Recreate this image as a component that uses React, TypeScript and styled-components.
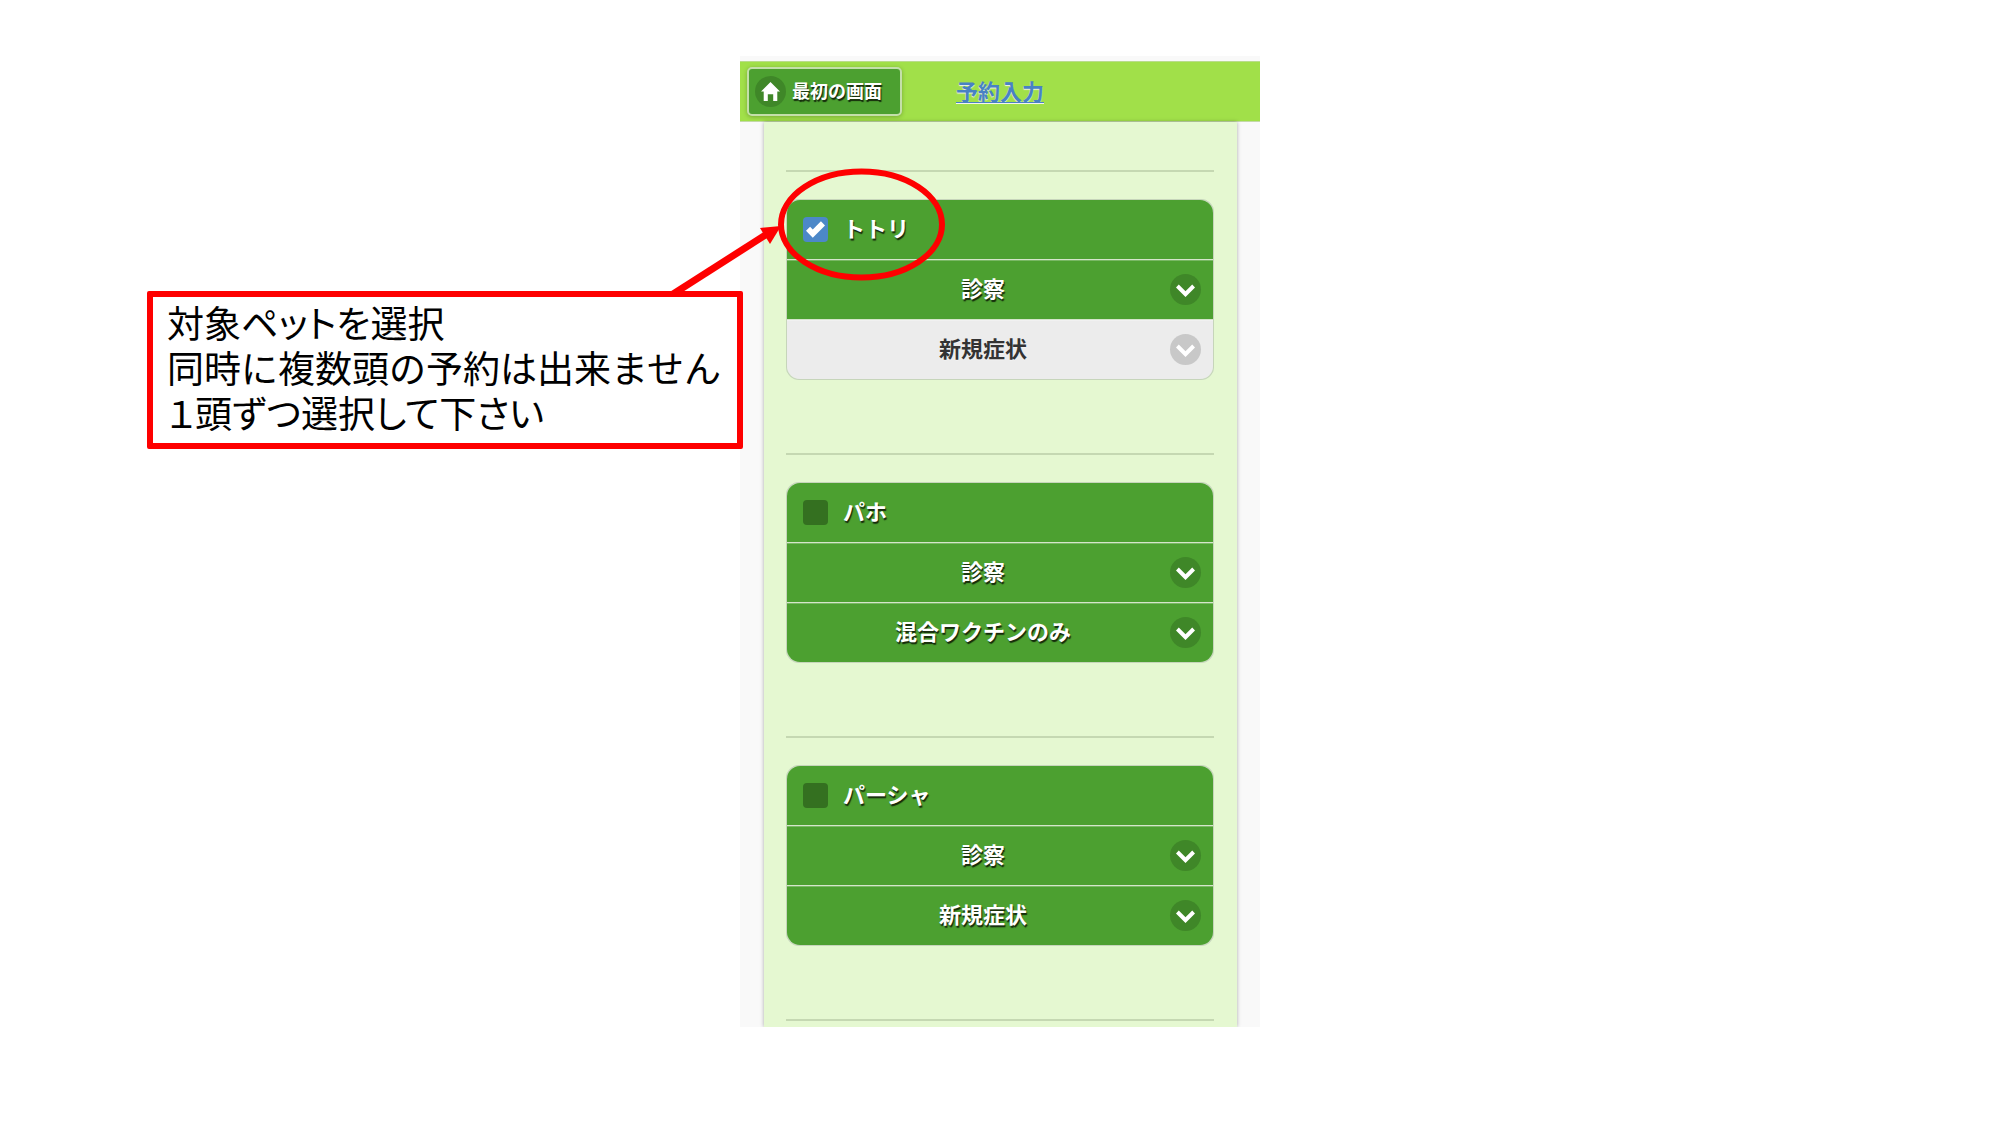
import React, { useState } from "react";
import styled, { createGlobalStyle, css } from "styled-components";

const fontStack = `"Liberation Sans", "Noto Sans CJK JP", sans-serif`;

const GlobalStyle = createGlobalStyle`
  *, *::before, *::after { box-sizing: border-box; }
  body {
    margin: 0;
    background: #fff;
    font-family: ${fontStack};
  }
`;

const Page = styled.main`
  padding: 56px 24px;
`;

const Stage = styled.div`
  position: relative;
  width: 100%;
  max-width: 520px;
  margin: 0 auto;
`;

const Screen = styled.section`
  padding-top: 5px;
  background: #f9f9f9;
  overflow: hidden;
`;

const Header = styled.header`
  display: grid;
  grid-template-columns: 1fr auto 1fr;
  align-items: center;
  padding: 5px 7px;
  background: #a1e049;
  border-top: 1px solid #b9dc8c;
  border-bottom: 1px solid #c3d9a8;
`;

const glyphShadow = css`
  text-shadow: 1px 2px 1px rgba(10, 20, 5, 0.85);
`;

const HomeButton = styled.button`
  justify-self: start;
  display: flex;
  align-items: center;
  gap: 6px;
  height: 49px;
  padding: 0 18px 0 6px;
  border: 2px solid #c4dfaa;
  border-radius: 5px;
  background: #4ca030;
  box-shadow: 0 1px 4px rgba(0, 0, 0, 0.25);
  color: #fff;
  font: 700 18px/26px ${fontStack};
  white-space: nowrap;
  ${glyphShadow}
`;

const Disc = styled.span<{ $muted?: boolean }>`
  display: grid;
  place-items: center;
  width: 31px;
  height: 31px;
  border-radius: 50%;
  background: ${(p) => (p.$muted ? "#c8c8c8" : "#3f8728")};
  pointer-events: none;
`;

const Title = styled.h1`
  margin: 0;
  padding-top: 2px;
  font: 700 22px/32px ${fontStack};
`;

const TitleLink = styled.a`
  color: #4882c4;
  text-decoration: underline;
  text-decoration-thickness: 1px;
  text-underline-offset: 2px;
  text-shadow: 0 1px 1px #f3f3f3;
`;

const Panel = styled.form`
  margin: 0 23px 0 24px;
  padding: 48px 23px 6px 22px;
  background: #e5f8d1;
  box-shadow: 0 0 4px rgba(0, 0, 0, 0.32);
`;

const Rule = styled.hr`
  height: 2px;
  margin: 0;
  border: 0;
  background: #c5d8b2;
`;

const Card = styled.fieldset`
  display: grid;
  gap: 1px;
  min-width: 0;
  margin: 27px 0 73px;
  padding: 0;
  border: 1px solid #c6d5ba;
  border-radius: 13px;
  background: #d5e5ca;
  overflow: hidden;
`;

const CheckRow = styled.label`
  display: flex;
  align-items: center;
  gap: 15px;
  height: 59px;
  padding: 0 16px;
  background: #4ca030;
  color: #fff;
  font-size: 22px;
  font-weight: 700;
  line-height: 32px;
  ${glyphShadow}
`;

const CheckBox = styled.span`
  display: grid;
  place-items: center;
  & > * {
    grid-area: 1 / 1;
  }
  svg {
    pointer-events: none;
  }
`;

const CheckInput = styled.input`
  appearance: none;
  width: 25px;
  height: 25px;
  margin: 0;
  border-radius: 4px;
  background: #347020;
  &:checked {
    background: #4c88c8;
  }
`;

const SelectRow = styled.div`
  display: grid;
  grid-template-columns: minmax(0, 1fr);
  align-items: center;
  & > * {
    grid-area: 1 / 1;
  }
  & > span {
    justify-self: end;
    margin-right: 12px;
  }
`;

const Select = styled.select<{ $muted: boolean }>`
  appearance: none;
  width: 100%;
  height: 59px;
  padding: 0 50px 0 16px;
  border: 0;
  border-radius: 0;
  background: ${(p) => (p.$muted ? "#ececec" : "#4ca030")};
  box-shadow: inset 0 1px 0 rgba(255, 255, 255, 0.25);
  color: ${(p) => (p.$muted ? "#333" : "#fff")};
  font: 700 22px/32px ${fontStack};
  text-align: center;
  text-align-last: center;
  ${(p) => (p.$muted ? "text-shadow: 0 1px 0 #f3f3f3;" : glyphShadow)}
`;

const Callout = styled.p`
  position: absolute;
  top: 235px;
  right: calc(100% - 3px);
  width: 596px;
  margin: 0;
  padding: 6px 14px 5px;
  border: 6px solid #fe0000;
  border-radius: 2px;
  background: #fff;
  color: #000;
  font-size: 37px;
  line-height: 45px;
  white-space: nowrap;
`;

const CalloutLine = styled.span<{ $proportional?: boolean }>`
  display: block;
  font-feature-settings: ${(p) => (p.$proportional ? '"palt"' : "normal")};
`;

const Pointer = styled.svg`
  position: absolute;
  left: -80px;
  top: 100px;
  pointer-events: none;
`;

const HomeIcon = () => (
  <svg width="19" height="19" viewBox="0 0 14 14" fill="#fff" aria-hidden="true">
    <polygon points="7,0 0,7 2,7 2,14 5,14 5,9 9,9 9,14 12,14 12,7 14,7" />
  </svg>
);

const CheckIcon = () => (
  <svg width="19" height="19" viewBox="0 0 14 14" fill="#fff" aria-hidden="true">
    <polygon points="14,4 11,1 5,7 3,5 0,8 5,13" />
  </svg>
);

const ChevronIcon = () => (
  <svg width="19" height="19" viewBox="0 0 14 14" fill="#fff" aria-hidden="true">
    <polygon points="11.95,3.4 7,8.35 2.05,3.4 0,5.5 7,12.6 14,5.5" />
  </svg>
);

interface Pet {
  id: string;
  name: string;
  symptom: string;
  muted?: boolean;
}

const pets: Pet[] = [
  { id: "pet1", name: "トトリ", symptom: "新規症状", muted: true },
  { id: "pet2", name: "パホ", symptom: "混合ワクチンのみ" },
  { id: "pet3", name: "パーシャ", symptom: "新規症状" },
];

const Dropdown = ({ label, value, muted = false }: { label: string; value: string; muted?: boolean }) => (
  <SelectRow>
    <Select aria-label={label} defaultValue={value} $muted={muted}>
      <option value={value}>{value}</option>
    </Select>
    <Disc $muted={muted}>
      <ChevronIcon />
    </Disc>
  </SelectRow>
);

export default function App() {
  const [selected, setSelected] = useState("pet1");

  return (
    <Page>
      <GlobalStyle />
      <Stage>
        <Screen>
          <Header>
            <HomeButton type="button">
              <Disc>
                <HomeIcon />
              </Disc>
              最初の画面
            </HomeButton>
            <Title>
              <TitleLink href="#">予約入力</TitleLink>
            </Title>
          </Header>
          <Panel>
            <Rule />
            {pets.map((pet) => (
              <React.Fragment key={pet.id}>
                <Card>
                  <CheckRow htmlFor={pet.id}>
                    <CheckBox>
                      <CheckInput
                        id={pet.id}
                        type="checkbox"
                        checked={selected === pet.id}
                        onChange={() => setSelected(selected === pet.id ? "" : pet.id)}
                      />
                      {selected === pet.id && <CheckIcon />}
                    </CheckBox>
                    {pet.name}
                  </CheckRow>
                  <Dropdown label={`${pet.name} 予約`} value="診察" />
                  <Dropdown label={`${pet.name} 症状`} value={pet.symptom} muted={pet.muted} />
                </Card>
                <Rule />
              </React.Fragment>
            ))}
          </Panel>
        </Screen>
        <Pointer width="300" height="140" viewBox="0 0 300 140" aria-hidden="true">
          <ellipse cx="201.5" cy="68.5" rx="80.5" ry="53" fill="none" stroke="#fe0000" strokeWidth="6" />
          <line x1="10" y1="140" x2="107" y2="78" stroke="#fe0000" strokeWidth="7" />
          <polygon points="121,70 100,72 110,88" fill="#fe0000" />
        </Pointer>
        <Callout>
          <CalloutLine $proportional>対象ペットを選択</CalloutLine>
          <CalloutLine>同時に複数頭の予約は出来ません</CalloutLine>
          <CalloutLine $proportional>１頭ずつ選択して下さい</CalloutLine>
        </Callout>
      </Stage>
    </Page>
  );
}
